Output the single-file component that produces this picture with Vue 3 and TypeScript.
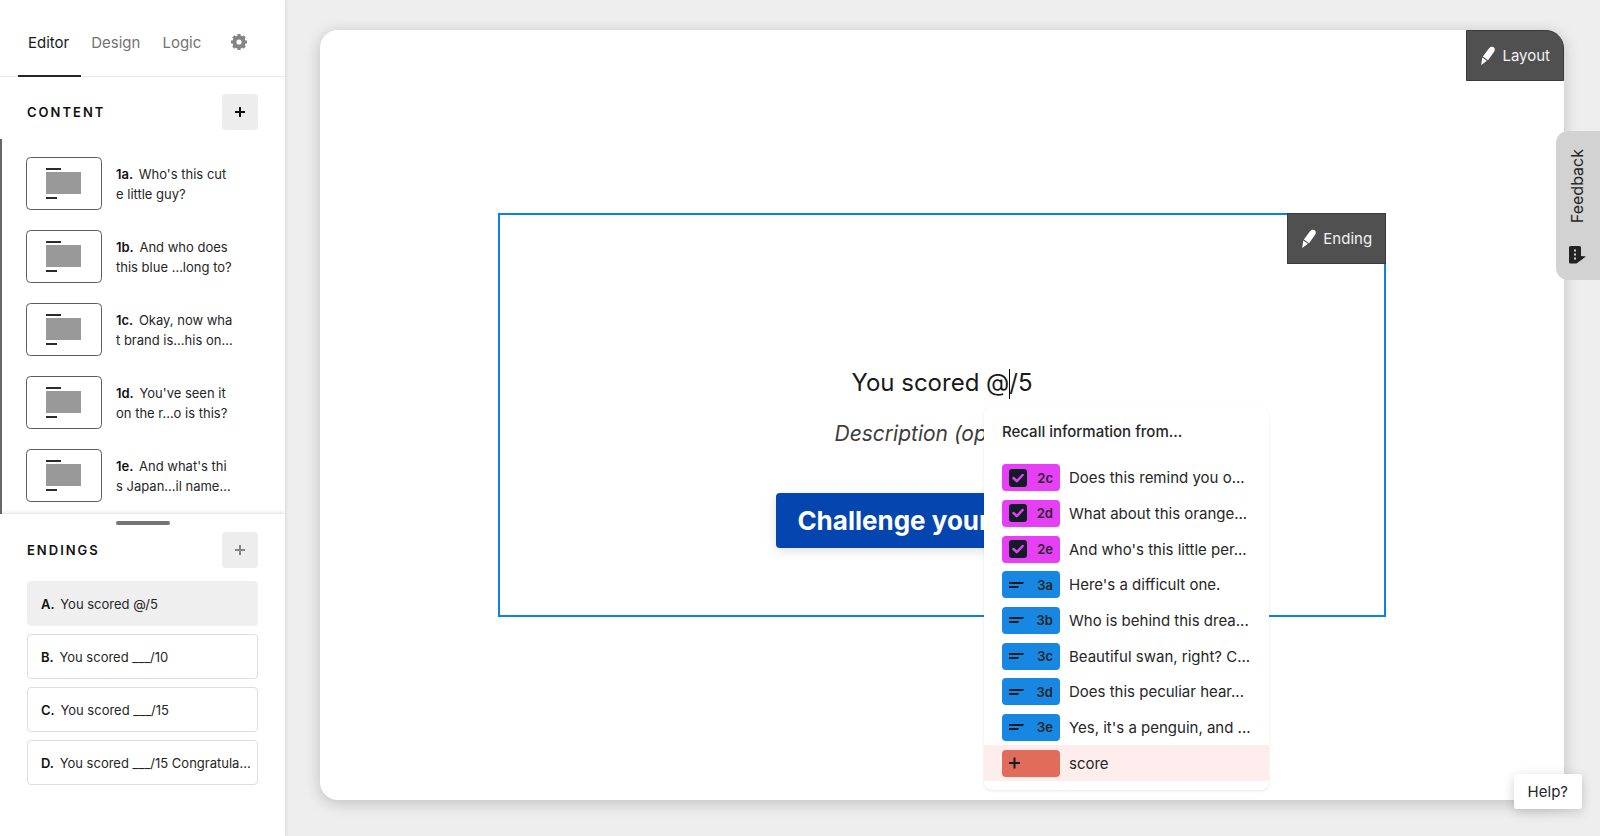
<script setup lang="ts">
import { ref } from 'vue'

interface Block { id: string; lines: [string, string] }
interface Ending { id: string; text: string }
interface RecallItem { kind: 'choice' | 'text' | 'variable'; code: string; label: string }

const tabs = ['Editor', 'Design', 'Logic']
const activeTab = ref('Editor')

const blocks: Block[] = [
  { id: '1a.', lines: ["Who's this cut", 'e little guy?'] },
  { id: '1b.', lines: ['And who does', 'this blue ...long to?'] },
  { id: '1c.', lines: ['Okay, now wha', 't brand is...his on...'] },
  { id: '1d.', lines: ["You've seen it", 'on the r...o is this?'] },
  { id: '1e.', lines: ["And what's thi", 's Japan...il name...'] },
]

const endings: Ending[] = [
  { id: 'A.', text: 'You scored @/5' },
  { id: 'B.', text: 'You scored ___/10' },
  { id: 'C.', text: 'You scored ___/15' },
  { id: 'D.', text: 'You scored ___/15 Congratula...' },
]
const activeEnding = ref('A.')

const recallItems: RecallItem[] = [
  { kind: 'choice', code: '2c', label: 'Does this remind you o...' },
  { kind: 'choice', code: '2d', label: 'What about this orange...' },
  { kind: 'choice', code: '2e', label: "And who's this little per..." },
  { kind: 'text', code: '3a', label: "Here's a difficult one." },
  { kind: 'text', code: '3b', label: 'Who is behind this drea...' },
  { kind: 'text', code: '3c', label: 'Beautiful swan, right? C...' },
  { kind: 'text', code: '3d', label: 'Does this peculiar hear...' },
  { kind: 'text', code: '3e', label: "Yes, it's a penguin, and ..." },
  { kind: 'variable', code: '', label: 'score' },
]
</script>

<template>
  <div class="app">
    <aside class="sidebar">
      <nav class="tabs">
        <button
          v-for="tab in tabs"
          :key="tab"
          type="button"
          class="tab"
          :class="{ active: tab === activeTab }"
          @click="activeTab = tab"
        >{{ tab }}</button>
        <button type="button" class="settings" aria-label="Settings">
          <svg viewBox="0 0 16 16" width="16" height="16" fill="none" stroke="#858585">
            <circle cx="8" cy="8" r="4.600" stroke-width="4" />
            <path stroke-width="3.200" d="M8 0v3M8 13v3M0 8h3M13 8h3M2.300 2.300l2.200 2.200M11.500 11.500l2.200 2.200M2.300 13.700l2.200-2.200M11.500 4.500l2.200-2.200" />
          </svg>
        </button>
      </nav>

      <section class="content">
        <header class="section-head">
          <h2>CONTENT</h2>
          <button type="button" class="add" aria-label="Add content">
            <svg viewBox="0 0 12 12" width="12" height="12"><path d="M6 1v10M1 6h10" fill="none" stroke="currentColor" stroke-width="2" /></svg>
          </button>
        </header>
        <ul class="blocks">
          <li v-for="block in blocks" :key="block.id">
            <button type="button" class="block">
              <svg class="thumb" viewBox="0 0 76 53" width="76" height="53">
                <rect x=".5" y=".5" width="75" height="52" rx="4" fill="#fff" stroke="#5c5c5c" />
                <rect x="20" y="11" width="15" height="2" fill="#2b2b2b" />
                <rect x="20" y="15" width="35" height="22" fill="#999" />
                <rect x="20" y="40" width="11" height="2" fill="#2b2b2b" />
              </svg>
              <span class="block-text"><b>{{ block.id }}</b> {{ block.lines[0] }}<br>{{ block.lines[1] }}</span>
            </button>
          </li>
        </ul>
      </section>

      <section class="endings">
        <div class="handle"></div>
        <header class="section-head">
          <h2>ENDINGS</h2>
          <button type="button" class="add muted" aria-label="Add ending">
            <svg viewBox="0 0 12 12" width="12" height="12"><path d="M6 1v10M1 6h10" fill="none" stroke="currentColor" stroke-width="2" /></svg>
          </button>
        </header>
        <ul class="ending-list">
          <li v-for="ending in endings" :key="ending.id">
            <button
              type="button"
              class="ending"
              :class="{ active: ending.id === activeEnding }"
              @click="activeEnding = ending.id"
            ><b>{{ ending.id }}</b> {{ ending.text }}</button>
          </li>
        </ul>
      </section>
    </aside>

    <main class="stage">
      <div class="card">
        <button type="button" class="edit edit-layout">
          <svg viewBox="0 0 16 20" width="16" height="20"><path fill="#fff" d="M8.800 2.600C10.200.6 12.300.2 13.700 1.300c1.500 1.100 1.500 3 .2 4.800L8 14.200 2.900 10.600zM2.300 11.500l4.600 3.300L1.200 19z" /></svg>
          Layout
        </button>

        <section class="frame">
          <button type="button" class="edit edit-ending">
            <svg viewBox="0 0 16 20" width="16" height="20"><path fill="#fff" d="M8.800 2.600C10.200.6 12.300.2 13.700 1.300c1.500 1.100 1.500 3 .2 4.800L8 14.200 2.900 10.600zM2.300 11.500l4.600 3.300L1.200 19z" /></svg>
            Ending
          </button>

          <h1 class="title" role="textbox" aria-label="Ending title">You scored @<span class="caret"></span>/5</h1>
          <input class="description" type="text" placeholder="Description (optional)" aria-label="Description">
          <button type="button" class="cta">Challenge your friends</button>

          <div class="recall">
            <h3>Recall information from...</h3>
            <ul>
              <li v-for="item in recallItems" :key="item.label">
                <button type="button" class="recall-item" :class="item.kind">
                  <span class="badge">
                    <svg v-if="item.kind === 'choice'" viewBox="0 0 18 18" width="18" height="18">
                      <rect width="18" height="18" rx="3" fill="#121c24" />
                      <path d="M4.500 9l3.300 3.200L13.600 6" fill="none" stroke="#e63ff5" stroke-width="2.500" stroke-linecap="round" stroke-linejoin="round" />
                    </svg>
                    <svg v-else-if="item.kind === 'text'" viewBox="0 0 18 18" width="18" height="18">
                      <path d="M0 6h15l-1 2H0zM0 10h10l-1 2H0z" fill="#121c24" />
                    </svg>
                    <svg v-else viewBox="0 0 18 18" width="18" height="18">
                      <path d="M5.500 3.500v11M0 9h11" fill="none" stroke="#121c24" stroke-width="2" />
                    </svg>
                    <span>{{ item.code }}</span>
                  </span>
                  <span class="recall-label">{{ item.label }}</span>
                </button>
              </li>
            </ul>
          </div>
        </section>
      </div>
    </main>

    <button type="button" class="feedback">
      <svg viewBox="0 0 17 18" width="17" height="18">
        <path d="M1.500 0h9A1.500 1.500 0 0 1 12 1.500V10l5 .5L7.500 17.500h-6A1.500 1.500 0 0 1 0 16V1.500A1.500 1.500 0 0 1 1.500 0z" fill="#222" />
        <path d="M5 3.500h2v2H5zM5 7.500h2v2H5zM5 11.500h2v2H5z" fill="#d2d2d2" />
      </svg>
      <span>Feedback</span>
    </button>
    <button type="button" class="help">Help?</button>
  </div>
</template>

<style>
body {
  margin: 0;
}
</style>

<style scoped>
.app {
  display: flex;
  min-height: 100vh;
  background: #eeeeee;
  color: #262626;
  font-family: Inter, "Liberation Sans", sans-serif;
  font-size: 15px;
}
.app *,
.app {
  box-sizing: border-box;
}
button,
input {
  font: inherit;
  color: inherit;
  border: 0;
  padding: 0;
  background: none;
  cursor: pointer;
}
ul {
  list-style: none;
  margin: 0;
  padding: 0;
}
svg {
  flex: none;
}
.sidebar {
  flex: none;
  width: 285px;
  display: flex;
  flex-direction: column;
  background: #fff;
  box-shadow: 0 0 4px rgba(0, 0, 0, 0.14);
}
.tabs {
  display: flex;
  height: 77px;
  padding-left: 18px;
  border-bottom: 1px solid #e8e8e8;
}
.tab {
  height: 77px;
  padding: 10px 12px 0 10px;
  border-bottom: 2px solid transparent;
  color: #737373;
}
.tab.active {
  color: #1a1a1a;
  border-color: #262626;
}
.settings {
  margin-left: 18px;
  padding-top: 8px;
  display: flex;
  align-items: center;
}
.section-head {
  display: flex;
  align-items: center;
  justify-content: space-between;
  padding: 0 27px;
}
.section-head h2 {
  margin: 0;
  font-size: 13px;
  font-weight: 600;
  letter-spacing: 2px;
  color: #111;
}
.add {
  width: 36px;
  height: 36px;
  display: grid;
  place-items: center;
  border-radius: 4px;
  background: #ededed;
  color: #111;
}
.add.muted {
  color: #858585;
}
.content .section-head {
  padding-top: 17px;
  padding-bottom: 9px;
}
.blocks {
  display: flex;
  flex-direction: column;
  gap: 20px;
  padding: 18px 24px 12px;
  border-left: 2px solid #64686e;
}
.block {
  display: flex;
  align-items: center;
  gap: 14px;
  text-align: left;
}
.block-text {
  font-size: 13px;
  line-height: 20px;
  white-space: nowrap;
}
b {
  margin-right: 2px;
  font-weight: 600;
  color: #111;
}
.endings {
  flex: 1;
  padding-top: 7px;
  box-shadow: 0 -1px 4px rgba(0, 0, 0, 0.14);
  clip-path: inset(-6px 0 0 0);
}
.handle {
  width: 54px;
  height: 4px;
  margin: 0 auto 7px;
  border-radius: 2px;
  background: #757575;
}
.ending-list {
  display: flex;
  flex-direction: column;
  gap: 8px;
  padding: 13px 27px;
}
.ending {
  width: 100%;
  height: 45px;
  padding: 0 0 0 13px;
  border: 1px solid #dedede;
  border-radius: 4px;
  font-size: 13px;
  text-align: left;
  white-space: nowrap;
}
.ending.active {
  background: #efefef;
  border-color: #efefef;
}
.stage {
  flex: 1;
  display: flex;
  padding: 30px 36px 36px 35px;
}
.card {
  position: relative;
  flex: 1;
  display: grid;
  place-items: center;
  border-radius: 18px;
  background: #fff;
  box-shadow: 0 3px 16px rgba(0, 0, 0, 0.2);
}
.edit {
  position: absolute;
  height: 51px;
  padding: 0 13px;
  display: flex;
  align-items: center;
  gap: 6px;
  background: #505050;
  border: 1px solid #3a3a3a;
  color: #f2f2f2;
}
.edit-layout {
  top: 0;
  right: 0;
  border-top-right-radius: 18px;
}
.edit-ending {
  top: -2px;
  right: -2px;
}
.frame {
  position: relative;
  width: 71.4%;
  min-height: 404px;
  display: flex;
  flex-direction: column;
  align-items: center;
  padding: 151px 20px 60px;
  border: 2px solid #0c83e2;
}
.title {
  margin: 0;
  font-size: 24px;
  line-height: 34px;
  font-weight: 400;
  color: #1a1a1a;
}
.caret {
  display: inline-block;
  width: 1px;
  height: 30px;
  margin-right: -1px;
  vertical-align: middle;
  background: #000;
}
.description {
  width: 100%;
  height: 32px;
  margin-top: 17px;
  font-size: 21px;
  font-style: italic;
  text-align: center;
  outline: none;
}
.description::placeholder {
  color: #3d3d3d;
  opacity: 1;
}
.cta {
  height: 55px;
  margin-top: 44px;
  padding: 0 21px;
  border-radius: 4px;
  background: #0445af;
  color: #fff;
  font-size: 26px;
  font-weight: 700;
  box-shadow: 0 3px 12px rgba(0, 0, 0, 0.12);
}
.recall {
  position: absolute;
  left: calc(50% + 42px);
  top: 192px;
  width: 285px;
  padding-bottom: 9px;
  border-radius: 8px;
  background: #fff;
  box-shadow: 0 1px 3px rgba(0, 0, 0, 0.1);
}
.recall h3 {
  margin: 0;
  padding: 15px 18px 18px;
  font-size: 15px;
  line-height: 20px;
  font-weight: 500;
}
.recall ul {
  display: grid;
  grid-auto-rows: 1fr;
  height: 321px;
}
.recall-item {
  width: 100%;
  height: 100%;
  padding: 0 18px;
  display: flex;
  align-items: center;
  gap: 9px;
  text-align: left;
  white-space: nowrap;
}
.recall-item.variable {
  background: #fdeeed;
}
.badge {
  flex: none;
  width: 58px;
  height: 27px;
  padding: 0 7px;
  display: flex;
  align-items: center;
  justify-content: space-between;
  border-radius: 4px;
  font-size: 13px;
  font-weight: 600;
}
.choice .badge {
  background: #e63ff5;
}
.text .badge {
  background: #1787e2;
}
.variable .badge {
  background: #e16c5b;
}
.feedback {
  position: absolute;
  right: 0;
  top: 131px;
  width: 44px;
  height: 149px;
  padding: 18px 2px 16px 0;
  display: flex;
  flex-direction: column-reverse;
  align-items: center;
  justify-content: space-between;
  border-radius: 12px 0 0 12px;
  background: #d2d2d2;
  font-size: 16px;
}
.feedback span {
  writing-mode: vertical-rl;
  transform: rotate(180deg);
}
.help {
  position: absolute;
  right: 18px;
  bottom: 27px;
  height: 35px;
  padding: 0 14px;
  border-radius: 3px;
  background: #fff;
  box-shadow: 0 3px 12px rgba(0, 0, 0, 0.18);
}
</style>
